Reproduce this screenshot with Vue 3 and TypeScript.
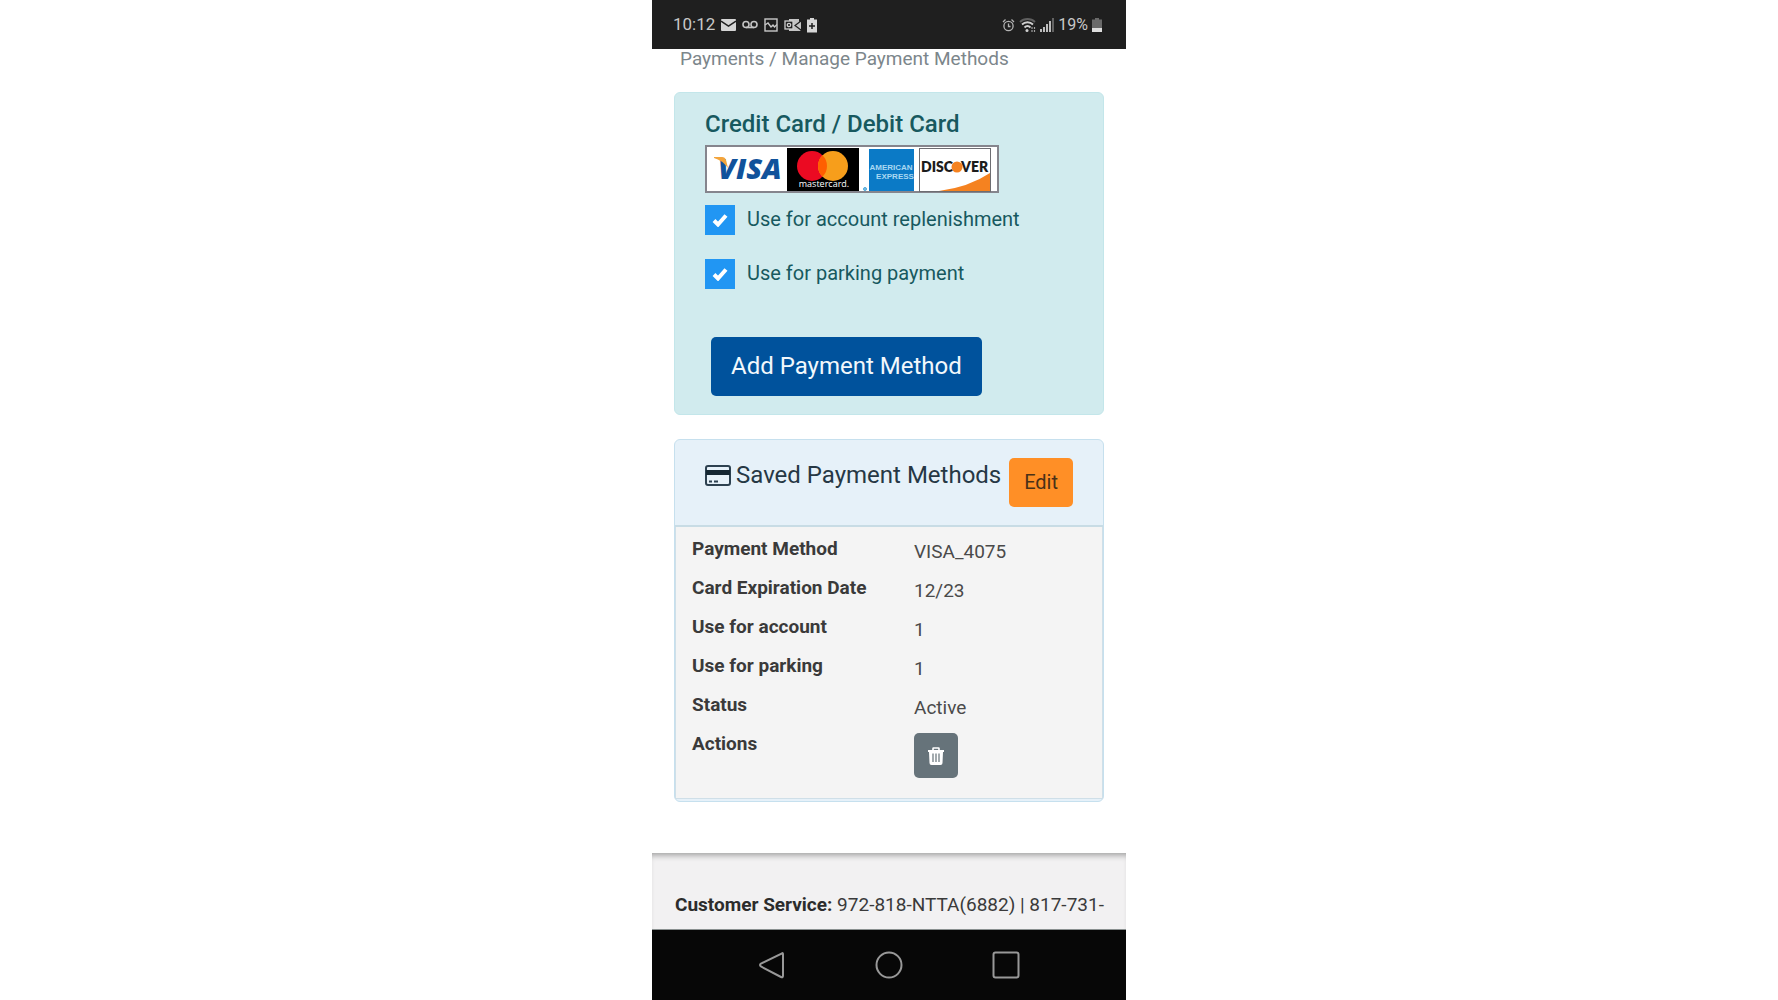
<script setup lang="ts">
import { ref } from 'vue'

interface Detail {
  label: string
  value: string
}

const forAccount = ref(true)
const forParking = ref(true)

const details: Detail[] = [
  { label: 'Payment Method', value: 'VISA_4075' },
  { label: 'Card Expiration Date', value: '12/23' },
  { label: 'Use for account', value: '1' },
  { label: 'Use for parking', value: '1' },
  { label: 'Status', value: 'Active' },
]
</script>

<template>
  <div class="phone">
    <header class="status">
      <div class="status-group">
        <span class="time">10:12</span>
        <svg width="15" height="16" viewBox="0 0 15 16" aria-hidden="true">
          <rect y="2" width="15" height="12" rx="1" fill="#d4d4d4" />
          <path d="M0 4l7.500 5L15 4" fill="none" stroke="#1f1f1f" stroke-width="1.500" />
        </svg>
        <svg width="16" height="16" viewBox="0 0 16 16" fill="none" stroke="#c4c4c4" stroke-width="1.600" aria-hidden="true">
          <circle cx="4" cy="7.500" r="3" />
          <circle cx="12" cy="7.500" r="3" />
          <path d="M4 10.500h8" />
        </svg>
        <svg width="14" height="16" viewBox="0 0 14 16" fill="none" stroke="#c8c8c8" stroke-width="1.400" aria-hidden="true">
          <rect x="1" y="2" width="12" height="12" />
          <path d="M1 8l3-2 3 4 2-2 1.500 2L13 7.500" />
        </svg>
        <svg width="17" height="16" viewBox="0 0 17 16" aria-hidden="true">
          <path d="M5 2h10v3l2-1v8l-1 1 1 1H5z" fill="#c4c4c4" />
          <path d="M17 4l-6 4.500 6 4.500" fill="none" stroke="#1f1f1f" stroke-width="1.200" />
          <rect x="1" y="4" width="8" height="8" fill="#1f1f1f" stroke="#d0d0d0" stroke-width="1.300" />
          <circle cx="5" cy="8" r="1.700" fill="none" stroke="#d0d0d0" stroke-width="1.300" />
        </svg>
        <svg width="10" height="16" viewBox="0 0 10 16" aria-hidden="true">
          <path d="M3 1h4v1.500h3V15.500H0V2.500h3z" fill="#d6d6d6" />
          <path d="M5 6v6M2 9h6" stroke="#1f1f1f" stroke-width="1.500" />
        </svg>
      </div>
      <div class="status-group end">
        <svg width="13" height="16" viewBox="0 0 13 16" fill="none" stroke="#b4b4b4" stroke-width="1.300" aria-hidden="true">
          <circle cx="6.500" cy="9" r="4.600" />
          <path d="M6.500 6.500V9.500h2M1 5L3.500 2.500M12 5L9.500 2.500" />
        </svg>
        <svg width="17" height="16" viewBox="0 0 17 16" fill="none" stroke-width="1.800" aria-hidden="true">
          <path d="M1 5c4-4 11-4 15 0" stroke="#5f5f5f" />
          <path d="M3 7.500c3-3 8-3 11 0M5.500 10.500c2-2 4-2 6 0" stroke="#d0d0d0" />
          <circle cx="8" cy="13.500" r="1.500" fill="#d0d0d0" />
          <path d="M13 10v5M15.500 10v5" stroke="#a0a0a0" stroke-width="1.200" stroke-dasharray="2 1" />
        </svg>
        <svg width="14" height="16" viewBox="0 0 14 16" stroke-width="1.800" aria-hidden="true">
          <path d="M1 15v-3M4 15v-5M7 15V7M10 15V4" stroke="#cfcfcf" />
          <path d="M13 15V1" stroke="#6b6b6b" />
        </svg>
        <span class="percent">19%</span>
        <svg width="10" height="16" viewBox="0 0 10 16" aria-hidden="true">
          <path d="M3 1h4v1.500h3V12H0V2.500h3z" fill="#6a6a6a" />
          <path d="M0 11h10v4H0z" fill="#dedede" />
        </svg>
      </div>
    </header>

    <main class="content">
      <div class="crumbs">Payments / Manage Payment Methods</div>

      <section class="panel add">
        <h2 class="add-title">Credit Card / Debit Card</h2>
        <svg class="brands" width="294" height="48" viewBox="0 0 294 48" role="img" aria-label="Accepted cards">
          <rect x="1" y="1" width="292" height="46" fill="#fff" stroke="#85858d" stroke-width="2" />
          <text x="13" y="34" class="visa">VISA</text>
          <path d="M9 12h8q3 0 4 3l2 8Q17 15 9 13z" fill="#f3a43c" />
          <rect x="82" y="3" width="72" height="43" fill="#000" />
          <circle cx="107" cy="21" r="15" fill="#eb0a22" />
          <circle cx="128" cy="21" r="15" fill="#f79e1b" />
          <path d="M117.500 10.300a15 15 0 0 1 0 21.400a15 15 0 0 1 0-21.400z" fill="#ff5f00" />
          <text x="119" y="42" class="mc">mastercard.</text>
          <circle cx="160" cy="44" r="1.500" fill="#7fc4e8" stroke="#4da6d8" />
          <rect x="164" y="4" width="45" height="42" fill="#0b7ac6" />
          <text x="186" y="25" class="amex">AMERICAN</text>
          <text x="190" y="34" class="amex">EXPRESS</text>
          <rect x="214.500" y="3.500" width="71" height="43" fill="#fff" stroke="#6d6d72" />
          <path d="M234 46Q264 42 285 28V46z" fill="#f58220" />
          <text x="216" y="27" class="disc">DISC</text>
          <circle cx="252" cy="22" r="5.500" fill="#f58220" />
          <text x="256" y="27" class="disc">VER</text>
        </svg>

        <div class="options">
          <label class="option">
            <span class="box">
              <input v-model="forAccount" type="checkbox" />
              <svg v-if="forAccount" width="16" height="14" viewBox="0 0 16 14" aria-hidden="true">
                <path d="M2 7.500l4 4L14 2.500" fill="none" stroke="#fff" stroke-width="4" />
              </svg>
            </span>
            <span>Use for account replenishment</span>
          </label>
          <label class="option">
            <span class="box">
              <input v-model="forParking" type="checkbox" />
              <svg v-if="forParking" width="16" height="14" viewBox="0 0 16 14" aria-hidden="true">
                <path d="M2 7.500l4 4L14 2.500" fill="none" stroke="#fff" stroke-width="4" />
              </svg>
            </span>
            <span>Use for parking payment</span>
          </label>
        </div>

        <button type="button" class="btn primary">Add Payment Method</button>
      </section>

      <section class="panel saved">
        <div class="saved-head">
          <h2 class="saved-title">
            <svg width="26" height="21" viewBox="0 0 26 21" aria-hidden="true">
              <rect x="1" y="1" width="24" height="19" rx="2" fill="none" stroke="#2d4150" stroke-width="2" />
              <path d="M1 5h24v5H1z" fill="#152733" />
              <path d="M4 16.500h3M9 16.500h4" stroke="#2d4150" stroke-width="2" />
            </svg>
            Saved Payment Methods
          </h2>
          <button type="button" class="btn edit">Edit</button>
        </div>
        <div class="saved-body">
          <table class="details">
            <tbody>
              <tr v-for="row in details" :key="row.label">
                <th scope="row">{{ row.label }}</th>
                <td>{{ row.value }}</td>
              </tr>
              <tr>
                <th scope="row">Actions</th>
                <td>
                  <button type="button" class="btn trash" aria-label="Delete">
                    <svg width="16" height="18" viewBox="0 0 16 18" aria-hidden="true">
                      <path d="M5 3V1.500Q5 1 5.500 1h5q.5 0 .5.500V3" fill="none" stroke="#fff" stroke-width="1.600" />
                      <path d="M0 3h16v2H15L14.500 16q0 2-2 2h-9q-2 0-2-2L1 5H0z" fill="#fff" />
                      <path d="M5 6.500V15M8 6.500V15M11 6.500V15" stroke="#66737a" stroke-width="1.200" />
                    </svg>
                  </button>
                </td>
              </tr>
            </tbody>
          </table>
        </div>
      </section>
    </main>

    <footer class="service"><strong>Customer Service:</strong> 972-818-NTTA(6882) | 817-731-</footer>

    <nav class="keys" aria-label="System">
      <button type="button" aria-label="Back">
        <svg width="28" height="28" viewBox="0 0 28 28"><path d="M24 2.500Q25 1.500 25 3.500V24.500Q25 27 23 26L3 15.500Q1 14 3 12.500z" /></svg>
      </button>
      <button type="button" aria-label="Home">
        <svg width="28" height="28" viewBox="0 0 28 28"><circle cx="14" cy="14" r="12.500" /></svg>
      </button>
      <button type="button" aria-label="Recent apps">
        <svg width="28" height="28" viewBox="0 0 28 28"><rect x="1.500" y="1.500" width="25" height="25" rx="2" /></svg>
      </button>
    </nav>
  </div>
</template>

<style>
body {
  background: #fff;
}
</style>

<style scoped>
.phone {
  box-sizing: border-box;
  display: flex;
  flex-direction: column;
  max-width: 474px;
  min-height: 100vh;
  margin: 0 auto;
  background: #fff;
  color: #3a3a3a;
  font-family: Roboto, "Liberation Sans", sans-serif;
  font-size: 19px;
}

.status {
  display: flex;
  align-items: center;
  justify-content: space-between;
  padding: 0 24px 0 21px;
  background: #1f1f1f;
  color: #c8c8c8;
  line-height: 49px;
}

.status-group {
  display: flex;
  align-items: center;
  gap: 6px;
}

.status-group.end {
  gap: 4px;
}

.time {
  font-size: 17px;
}

.percent {
  font-size: 16px;
}

.content {
  flex: 1;
  padding: 0 22px;
}

.crumbs {
  padding-left: 6px;
  margin-bottom: 23px;
  color: #7c868b;
  line-height: 20px;
}

.panel {
  border: 1px solid #c3e6ea;
  border-radius: 6px;
}

.add {
  display: flex;
  flex-direction: column;
  align-items: flex-start;
  padding: 16px 30px 18px;
  margin-bottom: 24px;
  background: #d1ebee;
  color: #17595f;
}

.add-title {
  margin: 0 0 6px;
  font-size: 24px;
  font-weight: 500;
  line-height: 30px;
}

.brands {
  display: block;
  margin-bottom: 12px;
}

.visa {
  fill: #10529b;
  font: italic 800 29px "Open Sans", sans-serif;
}

.mc {
  fill: #fff;
  font: 500 9px "Open Sans", sans-serif;
  text-anchor: middle;
}

.amex {
  fill: #a9d8f2;
  font: 700 8px "Liberation Sans", sans-serif;
  text-anchor: middle;
}

.disc {
  fill: #1c1c1c;
  font: 800 14px Lato, sans-serif;
}

.options {
  display: flex;
  flex-direction: column;
  gap: 24px;
  margin-bottom: 48px;
}

.option {
  display: flex;
  align-items: flex-start;
  gap: 12px;
  font-size: 20px;
  line-height: 28px;
}

.box {
  display: grid;
  place-items: center;
}

.box > * {
  grid-area: 1 / 1;
}

.box input {
  width: 30px;
  height: 30px;
  margin: 0;
  appearance: none;
  background: #2196f3;
}

.box svg {
  pointer-events: none;
}

.btn {
  border: 0;
  border-radius: 5px;
  font-family: inherit;
}

.primary {
  margin-left: 6px;
  padding: 0 20px;
  background: #00529c;
  color: #f2f8fc;
  font-size: 24px;
  line-height: 59px;
}

.saved {
  padding-bottom: 2px;
  background: #e6f1f9;
  border-color: #c6e0ee;
}

.saved-head {
  display: flex;
  justify-content: space-between;
  padding: 18px 30px;
  border-bottom: 2px solid #c8dce5;
}

.saved-title {
  display: flex;
  align-items: center;
  gap: 5px;
  height: 34px;
  margin: 0;
  color: #263845;
  font-size: 24px;
  font-weight: 400;
  white-space: nowrap;
}

.edit {
  padding: 0 15px;
  background: #ff8f26;
  color: #4a3118;
  font-size: 20px;
  line-height: 49px;
}

.saved-body {
  padding: 3px 16px 16px;
  border: 1px solid #cfdfe8;
  border-top: 0;
  background: #f4f4f4;
}

.details {
  width: 100%;
  border-collapse: collapse;
  line-height: 27px;
  text-align: left;
}

.details th {
  width: 222px;
  padding: 5px 0 0;
  font-weight: 700;
  vertical-align: top;
}

.details td {
  padding: 8px 0 4px;
  color: #4a4a4a;
  vertical-align: top;
}

.trash {
  display: flex;
  align-items: center;
  justify-content: center;
  width: 44px;
  height: 45px;
  padding: 0;
  background: #66737a;
}

.service {
  padding: 37px 0 9px 23px;
  border-bottom: 1px solid #8a9090;
  background: #f2f1f2;
  box-shadow: inset 0 6px 6px -4px #9a9a9a;
  line-height: 30px;
  white-space: nowrap;
}

.service strong {
  color: #2c2c2c;
}

.keys {
  display: flex;
  justify-content: center;
  gap: 89px;
  padding: 21px 0;
  background: #070707;
}

.keys button {
  padding: 0;
  border: 0;
  background: none;
}

.keys svg {
  display: block;
  fill: none;
  stroke: #989898;
  stroke-width: 2;
}
</style>
